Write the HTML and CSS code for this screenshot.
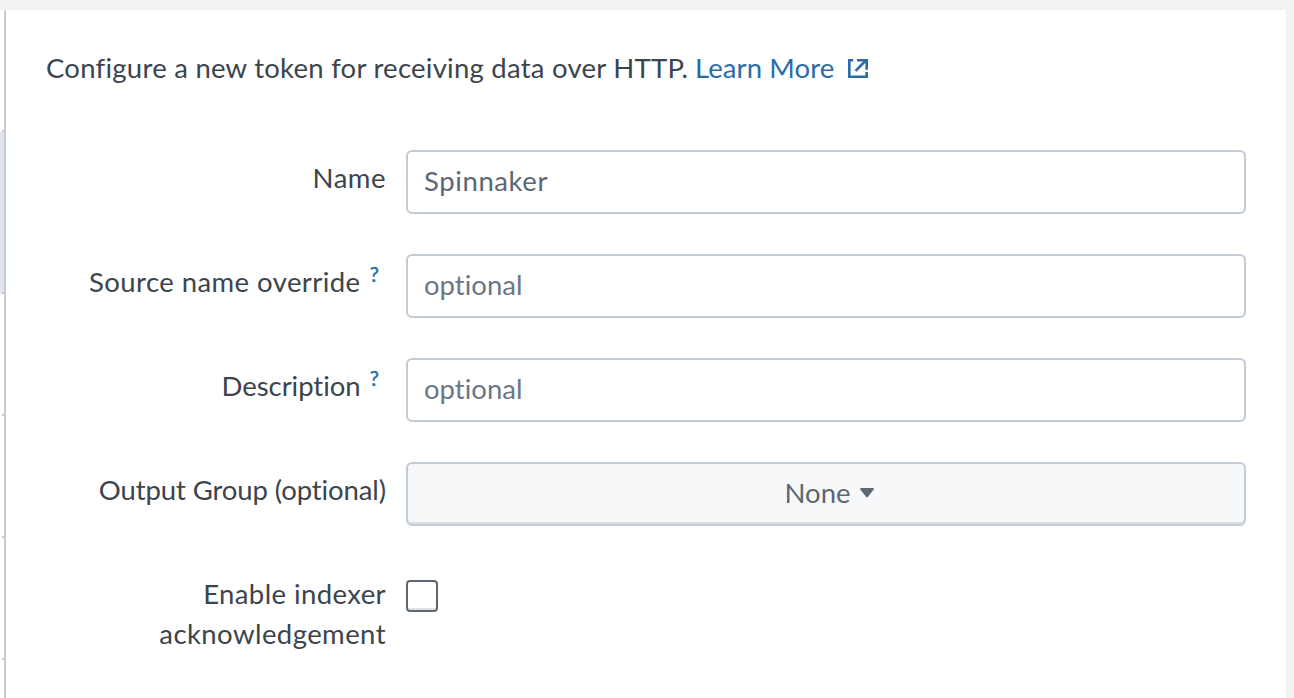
FILE: index.html
```html
<!DOCTYPE html>
<html lang="en">
<head>
<meta charset="utf-8">
<title>HTTP token settings</title>
<link rel="stylesheet" href="styles.css">
</head>
<body>
<div class="page">
  <aside class="rail">
    <div class="step"></div>
    <div class="step step-active"></div>
    <div class="step"></div>
    <div class="step"></div>
    <div class="step"></div>
  </aside>
  <main class="panel">
    <p class="intro"><span class="intro-text">Configure a new token for receiving data over HTTP.</span><a class="link">Learn More</a><svg class="external" width="22" height="20" viewBox="0 0 22 20" fill="none" stroke="currentColor" stroke-width="2.6"><path d="M6.2 1.3H2.3v16.4h17.4v-4.6"/><path d="M8.6 11.8L18.3 2"/><path d="M10 1.3h9.7v9.4"/></svg></p>
    <form class="form">
      <div class="row">
        <label class="label" for="name"><span class="t-name">Name</span></label>
        <input class="field field-value" id="name" type="text" value="Spinnaker">
      </div>
      <div class="row">
        <label class="label" for="source"><span class="t-source">Source name override</span><span class="help">?</span></label>
        <input class="field" id="source" type="text" placeholder="optional">
      </div>
      <div class="row">
        <label class="label" for="desc"><span class="t-desc">Description</span><span class="help">?</span></label>
        <input class="field" id="desc" type="text" placeholder="optional">
      </div>
      <div class="row">
        <span class="label"><span class="t-output">Output Group (optional)</span></span>
        <button class="select" type="button"><span class="t-none">None</span><svg class="caret" width="14" height="10" viewBox="0 0 14 10"><path d="M1 0h12q1.3.4.7 1.6L8 8.8q-1 1-2 0L.3 1.6Q-.3.4 1 0z" fill="currentColor"/></svg></button>
      </div>
      <div class="row">
        <label class="label" for="ack"><span class="t-enable">Enable indexer</span><br><span class="t-ack">acknowledgement</span></label>
        <input class="check" id="ack" type="checkbox">
      </div>
    </form>
  </main>
</div>
</body>
</html>
```
FILE: styles.css
```css
* { box-sizing: border-box; }
body {
  margin: 0;
  background: #f2f3f5;
  color: #3c444d;
  font: 27.5px/40px Lato, "Open Sans", sans-serif;
  font-variant-ligatures: none;
}
.page {
  display: flex;
  height: 698px;
  padding: 10px 8px 0 0;
}
.rail {
  width: 6px;
  background: #fff;
  border-right: 2px solid #c3cbd4;
}
.step {
  height: 122px;
  background: linear-gradient(#c3cbd4, #c3cbd4) 2px 100% / 2px 2px no-repeat;
}
.step-active {
  height: 162px;
  background-color: #e1e5ea;
}
.panel {
  flex: 1;
  padding: 38px 40px 0;
  background: #fff;
}
.intro {
  display: flex;
  align-items: center;
  margin: 0 0 62px;
  height: 40px;
  white-space: nowrap;
}
.intro-text { width: 649px; letter-spacing: 0.25px; }
.link, .external, .help { color: #2b6ca8; }
.link { letter-spacing: 0.1px; }
.external { margin: 1px 0 0 13px; }
.form { display: grid; gap: 40px; }
.row {
  display: flex;
  align-items: flex-start;
  gap: 20px;
  height: 64px;
}
.row:last-child { height: 90px; }
.label {
  width: 340px;
  padding-top: 8px;
  text-align: right;
  white-space: nowrap;
}
.t-name { letter-spacing: 0.5px; }
.t-source { letter-spacing: 0.43px; }
.t-desc { letter-spacing: -0.05px; }
.t-output { letter-spacing: -0.1px; }
.t-enable { letter-spacing: 0.4px; }
.t-ack { letter-spacing: 0.43px; }
.help {
  display: inline-block;
  margin: 0 7px 0 9px;
  font-size: 21px;
  font-weight: 500;
  line-height: 20px;
  vertical-align: 10px;
  -webkit-text-stroke: 0.3px currentColor;
}
.field, .select {
  width: 840px;
  height: 64px;
  border: 2px solid #c3cbd4;
  border-radius: 6px;
  font: inherit;
  font-variant-ligatures: none;
  color: #5c6773;
}
.field {
  padding: 0 16px 4px;
  background: #fff;
}
.field-value { letter-spacing: 0.6px; }
.field::placeholder { color: #6b7785; opacity: 1; }
.select {
  display: flex;
  align-items: center;
  justify-content: center;
  gap: 9px;
  padding: 0 0 2px 6px;
  background: #f7f8fa;
  box-shadow: inset 0 -2px #dcdfe2;
}
.check {
  appearance: none;
  width: 32px;
  height: 32px;
  margin: 14px 0 0;
  border: 2px solid #5c6773;
  border-radius: 4px;
  background: #fff;
  box-shadow: inset 0 -2px #e1e2e4;
}
```
